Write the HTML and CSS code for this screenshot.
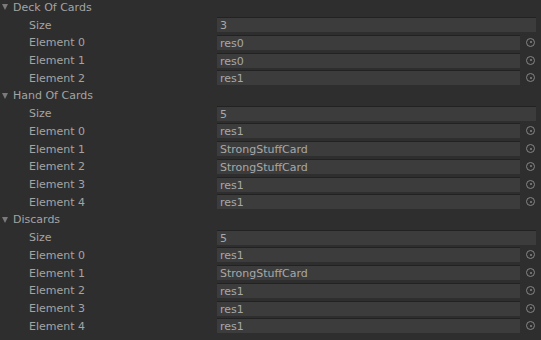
FILE: index.html
```html
<!DOCTYPE html>
<html>
<head>
<meta charset="utf-8">
<title>Inspector</title>
<link rel="stylesheet" href="styles.css">
</head>
<body>
<div class="inspector">
	<div class="row header"><span class="fold"></span>Deck Of Cards</div>
	<div class="row"><span class="label">Size</span><span class="field wide">3</span></div>
	<div class="row"><span class="label">Element 0</span><span class="field">res0</span><span class="pick"></span></div>
	<div class="row"><span class="label">Element 1</span><span class="field">res0</span><span class="pick"></span></div>
	<div class="row"><span class="label">Element 2</span><span class="field">res1</span><span class="pick"></span></div>

	<div class="row header"><span class="fold"></span>Hand Of Cards</div>
	<div class="row"><span class="label">Size</span><span class="field wide">5</span></div>
	<div class="row"><span class="label">Element 0</span><span class="field">res1</span><span class="pick"></span></div>
	<div class="row"><span class="label">Element 1</span><span class="field">StrongStuffCard</span><span class="pick"></span></div>
	<div class="row"><span class="label">Element 2</span><span class="field">StrongStuffCard</span><span class="pick"></span></div>
	<div class="row"><span class="label">Element 3</span><span class="field">res1</span><span class="pick"></span></div>
	<div class="row"><span class="label">Element 4</span><span class="field">res1</span><span class="pick"></span></div>

	<div class="row header"><span class="fold"></span>Discards</div>
	<div class="row"><span class="label">Size</span><span class="field wide">5</span></div>
	<div class="row"><span class="label">Element 0</span><span class="field">res1</span><span class="pick"></span></div>
	<div class="row"><span class="label">Element 1</span><span class="field">StrongStuffCard</span><span class="pick"></span></div>
	<div class="row"><span class="label">Element 2</span><span class="field">res1</span><span class="pick"></span></div>
	<div class="row"><span class="label">Element 3</span><span class="field">res1</span><span class="pick"></span></div>
	<div class="row"><span class="label">Element 4</span><span class="field">res1</span><span class="pick"></span></div>
</div>
</body>
</html>
```
FILE: styles.css
```css
* {
	padding:0;
	margin:0;
	box-sizing:border-box;
}
html, body {
	background:#2e2e2e;
	height:100%;
	overflow:hidden;
}
body {
	font-family:"DejaVu Sans", sans-serif;
	font-size:11px;
	color:#a4a4a4;
}
.inspector {
	margin-top:-2px;
}
.row {
	display:grid;
	grid-template-columns:217px 1fr 16px;
	padding-right:5px;
	height:17.72px;
	align-items:center;
}
.row.header {
	display:flex;
	align-items:center;
	padding-left:2px;
	padding-top:1px;
}
.fold {
	width:0;
	height:0;
	border-left:3.5px solid transparent;
	border-right:3.5px solid transparent;
	border-top:6px solid #7a7a7a;
	margin-right:5px;
}
.label {
	padding-left:29px;
	padding-top:1px;
	white-space:nowrap;
}
.field {
	height:15px;
	line-height:15px;
	background:#3c3c3c;
	border-top:1px solid #222;
	padding-left:3px;
	color:#a8a8a8;
	white-space:nowrap;
	overflow:hidden;
}
.field.wide {
	grid-column:2 / 4;
}
.pick {
	justify-self:end;
	margin-right:1px;
	width:9px;
	height:9px;
	border-radius:50%;
	border:1.5px solid #858585;
	position:relative;
}
.pick::after {
	content:"";
	position:absolute;
	left:50%;
	top:50%;
	width:2px;
	height:2px;
	margin:-1px 0 0 -1px;
	border-radius:50%;
	background:#858585;
}
```
